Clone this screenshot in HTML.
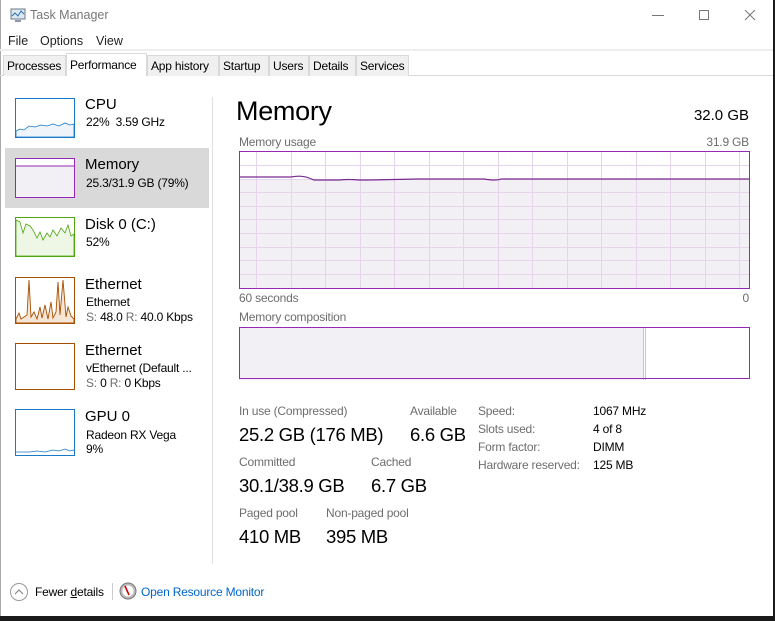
<!DOCTYPE html>
<html><head><meta charset="utf-8"><style>
*{margin:0;padding:0;box-sizing:border-box}
body{width:775px;height:621px;background:#1a1a1a;font-family:"Liberation Sans",sans-serif;position:relative;overflow:hidden;color:#000}
#win{position:absolute;left:0;top:0;width:773px;height:616px;background:#fff;box-shadow:inset 1px 0 0 #aaa}
.a{position:absolute;white-space:nowrap}
.g{color:#6d6d6d}
.tab{position:absolute;top:55px;height:21px;background:#f0f0f0;border:1px solid #d9d9d9;border-bottom:none;font-size:12px;line-height:20px;padding:0 3px;white-space:nowrap;overflow:hidden;letter-spacing:-0.2px}
.side .t{font-size:15px}
.side .s{font-size:12px;letter-spacing:-0.2px}
.lbl{font-size:12px;color:#6d6d6d;letter-spacing:-0.2px}
.big{font-size:18.5px;letter-spacing:-0.3px}
.r{font-size:12px;letter-spacing:-0.2px}
</style></head><body>
<div id="win">
<svg class="a" style="left:9px;top:8px" width="18" height="16"><rect x="2" y="1" width="14" height="10" fill="#dde8f0" stroke="#6a7a88"/><polyline points="3,8 6,5 9,8 12,3 15,6" fill="none" stroke="#2a6fb0"/><rect x="6" y="12" width="6" height="2" fill="#8a9aa8"/></svg>
<div class="a" style="left:30px;top:8px;font-size:12.5px;color:#777">Task Manager</div>
<div class="a" style="left:652px;top:15px;width:12px;height:1px;background:#777"></div>
<div class="a" style="left:699px;top:10px;width:10px;height:10px;border:1px solid #777"></div>
<svg class="a" style="left:744px;top:9px" width="12" height="12"><path d="M1 1L11 11M11 1L1 11" stroke="#777"/></svg>
<div class="a" style="left:8px;top:34px;font-size:12.5px;color:#222">File</div>
<div class="a" style="left:40px;top:34px;font-size:12.5px;color:#222">Options</div>
<div class="a" style="left:96px;top:34px;font-size:12.5px;color:#222">View</div>
<div class="a" style="left:0;top:49px;width:773px;height:2px;background:#eee"></div>
<div class="a" style="left:0;top:75px;width:773px;height:1px;background:#d9d9d9"></div>
<div class="tab" style="left:3px;width:63px">Processes</div>
<div class="tab" style="left:66px;top:53px;height:23px;width:81px;background:#fff;padding-top:1px">Performance</div>
<div class="tab" style="left:147px;width:72px">App history</div>
<div class="tab" style="left:219px;width:50px">Startup</div>
<div class="tab" style="left:269px;width:40px">Users</div>
<div class="tab" style="left:309px;width:47px">Details</div>
<div class="tab" style="left:356px;width:53px">Services</div>

<div class="a" style="left:5px;top:148px;width:204px;height:60px;background:#d9d9d9"></div>
<div class="a" style="left:212px;top:97px;width:1px;height:467px;background:#e0e0e0"></div>

<div class="side">
<svg class="a" style="left:15px;top:98px" width="60" height="40"><rect x="0.5" y="0.5" width="59" height="39" fill="#fff" stroke="#1979c8"/><path d="M1 33 L5 31 9 32 14 28 20 29 26 27 32 28 38 26 44 28 50 25 55 27 59 26 V39 H1Z" fill="#eef4fa" stroke="#1979c8" stroke-width="0.8"/></svg>
<div class="a t" style="left:85px;top:96px">CPU</div>
<div class="a s" style="left:86px;top:115px">22%&nbsp; 3.59 GHz</div>

<svg class="a" style="left:15px;top:158px" width="60" height="40"><rect x="0.5" y="0.5" width="59" height="39" fill="#f2f0f4" stroke="#9528b4"/><rect x="1" y="1" width="58" height="7" fill="#fff"/><path d="M1 8H59" stroke="#9528b4"/></svg>
<div class="a t" style="left:85px;top:156px">Memory</div>
<div class="a s" style="left:86px;top:176px">25.3/31.9 GB (79%)</div>

<svg class="a" style="left:15px;top:217px" width="60" height="40"><rect x="0.5" y="0.5" width="59" height="39" fill="#fff" stroke="#4da60c"/><path d="M1 3 L5 5 8 16 11 7 15 9 18 13 22 21 25 15 28 23 32 16 35 20 38 13 42 19 46 11 50 16 53 8 56 19 59 17 V39 H1Z" fill="#eef7e6" stroke="#4da60c" stroke-width="0.8"/></svg>
<div class="a t" style="left:85px;top:216px">Disk 0 (C:)</div>
<div class="a s" style="left:86px;top:235px">52%</div>

<svg class="a" style="left:15px;top:277px" width="60" height="47"><rect x="0.5" y="0.5" width="59" height="46" fill="#fff" stroke="#a74f01"/><path d="M1 42 L4 36 6 42 9 40 12 38 14 3 16 40 19 35 22 42 25 30 27 41 30 28 33 42 36 25 38 41 41 35 43 5 45 38 48 3 51 40 53 30 56 39 59 42 V46 H1Z" fill="#f7e6d6" stroke="#a74f01" stroke-width="0.9"/></svg>
<div class="a t" style="left:85px;top:276px">Ethernet</div>
<div class="a s" style="left:86px;top:295px">Ethernet</div>
<div class="a s" style="left:86px;top:310px"><span class="g">S:</span> 48.0 <span class="g">R:</span> 40.0 Kbps</div>

<svg class="a" style="left:15px;top:343px" width="60" height="47"><rect x="0.5" y="0.5" width="59" height="46" fill="#fff" stroke="#a74f01"/></svg>
<div class="a t" style="left:85px;top:342px">Ethernet</div>
<div class="a s" style="left:86px;top:361px">vEthernet (Default ...</div>
<div class="a s" style="left:86px;top:376px"><span class="g">S:</span> 0 <span class="g">R:</span> 0 Kbps</div>

<svg class="a" style="left:15px;top:409px" width="60" height="47"><rect x="0.5" y="0.5" width="59" height="46" fill="#fff" stroke="#1979c8"/><path d="M1 43 L15 43 22 42 30 43 38 41 44 42 50 40 55 42 59 41" fill="none" stroke="#1979c8" stroke-width="0.8"/></svg>
<div class="a t" style="left:85px;top:408px">GPU 0</div>
<div class="a s" style="left:86px;top:428px">Radeon RX Vega</div>
<div class="a s" style="left:86px;top:442px">9%</div>
</div>

<div class="a" style="left:236px;top:96px;font-size:27px;letter-spacing:-0.3px">Memory</div>
<div class="a" style="left:600px;top:107px;width:149px;text-align:right;font-size:15px">32.0 GB</div>
<div class="a lbl" style="left:239px;top:135px">Memory usage</div>
<div class="a lbl" style="left:600px;top:135px;width:149px;text-align:right">31.9 GB</div>

<svg class="a" style="left:239px;top:151px" width="511" height="138">
<rect x="0" y="0" width="511" height="138" fill="#fff"/>
<rect x="0" y="28" width="511" height="110" fill="#f2f0f4"/>
<g stroke="#e6d3ec" stroke-width="1">
<path d="M17.5 0V138M52.5 0V138M86.5 0V138M121.5 0V138M155.5 0V138M190.5 0V138M224.5 0V138M259.5 0V138M293.5 0V138M328.5 0V138M362.5 0V138M397.5 0V138M431.5 0V138M466.5 0V138M500.5 0V138"/>
<path d="M0 14.5H511M0 28.5H511M0 41.5H511M0 55.5H511M0 68.5H511M0 82.5H511M0 96.5H511M0 109.5H511M0 123.5H511"/>
</g>
<path d="M1 26 L52 26 Q62 24 70 27 L75 29 L100 29 Q110 28 120 29 L130 29 L180 28 L245 28 Q258 30 262 28 L511 28" fill="none" stroke="#7a2a90" stroke-width="1.2"/>
<rect x="0.5" y="0.5" width="510" height="137" fill="none" stroke="#9528b4"/>
</svg>
<div class="a lbl" style="left:239px;top:291px">60 seconds</div>
<div class="a lbl" style="left:700px;top:291px;width:49px;text-align:right">0</div>
<div class="a lbl" style="left:239px;top:310px">Memory composition</div>
<svg class="a" style="left:239px;top:327px" width="511" height="53">
<rect x="0" y="0" width="404" height="53" fill="#f2f0f4"/>
<path d="M404.5 0V53M406.5 0V53" stroke="#d7b6e0"/>
<rect x="0.5" y="0.5" width="510" height="51" fill="none" stroke="#9528b4"/>
</svg>

<div class="a lbl" style="left:239px;top:404px">In use (Compressed)</div>
<div class="a big" style="left:239px;top:424px">25.2 GB (176 MB)</div>
<div class="a lbl" style="left:410px;top:404px">Available</div>
<div class="a big" style="left:410px;top:424px">6.6 GB</div>
<div class="a lbl" style="left:239px;top:455px">Committed</div>
<div class="a big" style="left:239px;top:475px">30.1/38.9 GB</div>
<div class="a lbl" style="left:371px;top:455px">Cached</div>
<div class="a big" style="left:371px;top:475px">6.7 GB</div>
<div class="a lbl" style="left:239px;top:506px">Paged pool</div>
<div class="a big" style="left:239px;top:526px">410 MB</div>
<div class="a lbl" style="left:326px;top:506px">Non-paged pool</div>
<div class="a big" style="left:326px;top:526px">395 MB</div>

<div class="a lbl" style="left:478px;top:404px">Speed:</div>
<div class="a r" style="left:593px;top:404px">1067 MHz</div>
<div class="a lbl" style="left:478px;top:422px">Slots used:</div>
<div class="a r" style="left:593px;top:422px">4 of 8</div>
<div class="a lbl" style="left:478px;top:440px">Form factor:</div>
<div class="a r" style="left:593px;top:440px">DIMM</div>
<div class="a lbl" style="left:478px;top:458px">Hardware reserved:</div>
<div class="a r" style="left:593px;top:458px">125 MB</div>

<svg class="a" style="left:9px;top:582px" width="20" height="20"><circle cx="10" cy="10" r="8.5" fill="#fff" stroke="#999"/><path d="M6 12L10 8 14 12" fill="none" stroke="#888" stroke-width="1.2"/></svg>
<div class="a" style="left:35px;top:585px;font-size:12px;letter-spacing:-0.2px">Fewer <u>d</u>etails</div>
<div class="a" style="left:112px;top:583px;width:1px;height:17px;background:#ccc"></div>
<svg class="a" style="left:119px;top:582px" width="18" height="18"><circle cx="9" cy="9" r="8" fill="#bbb" stroke="#777"/><circle cx="9" cy="9" r="5.5" fill="#fff"/><path d="M6 4L10 13" stroke="#c00" stroke-width="1.6"/></svg>
<div class="a" style="left:141px;top:585px;font-size:12px;letter-spacing:-0.2px;color:#0066cc">Open Resource Monitor</div>
</div>
</body></html>
